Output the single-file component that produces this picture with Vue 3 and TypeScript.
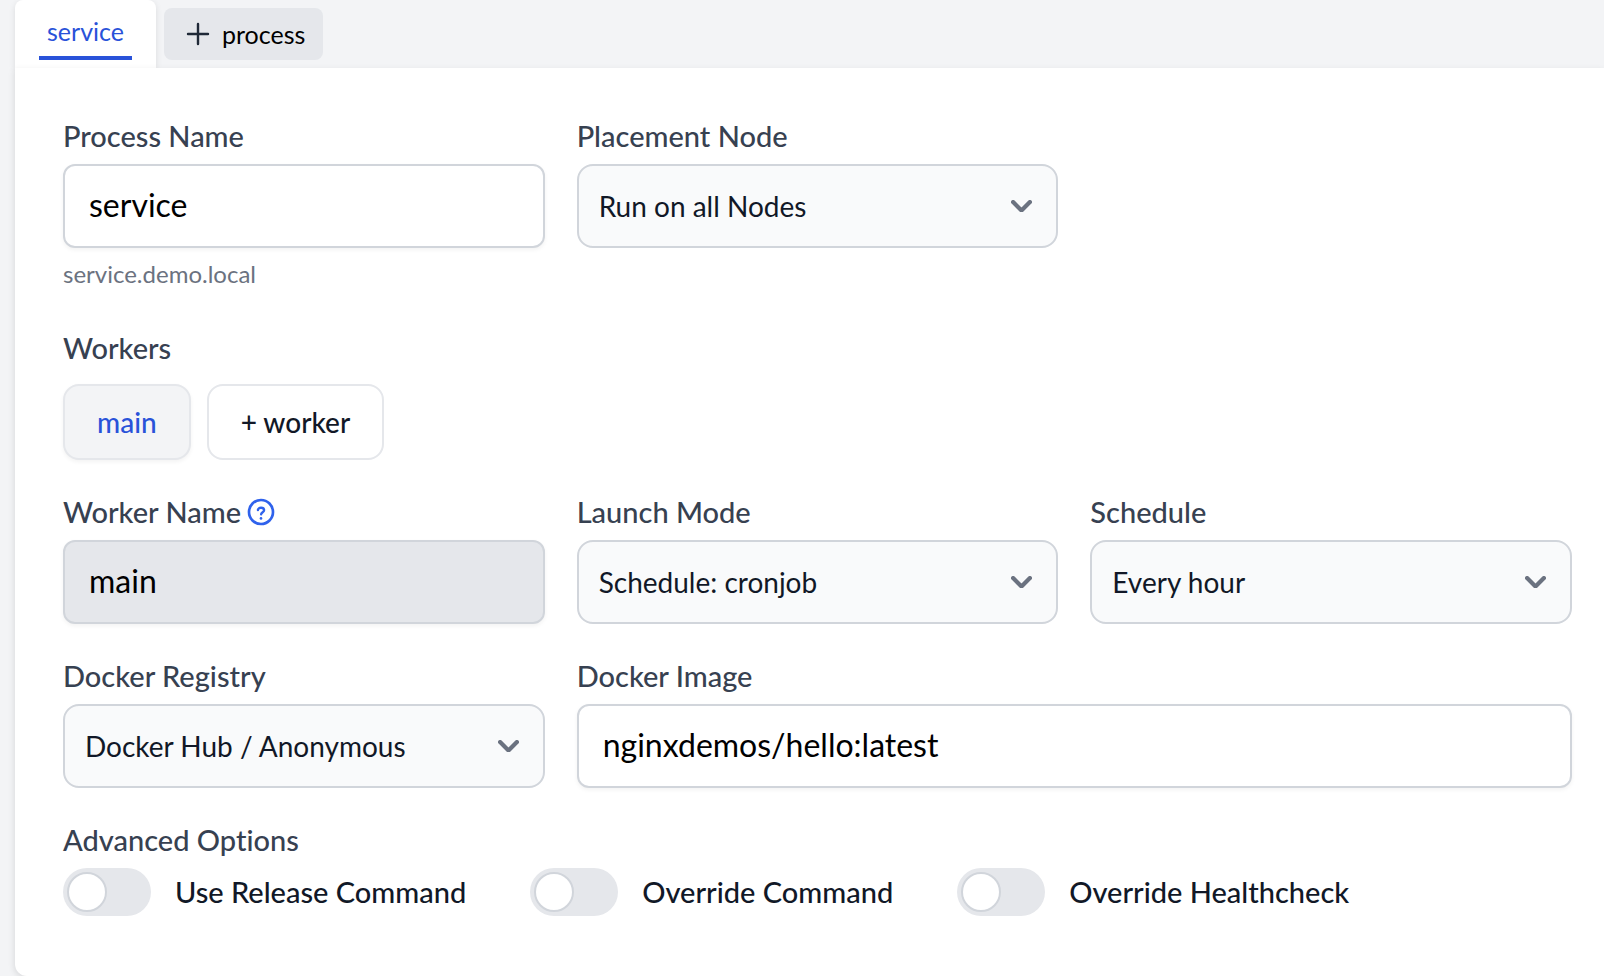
<script setup lang="ts">
import { ref } from 'vue'

interface Toggle {
  id: string
  label: string
  on: boolean
}

const processName = ref('service')
const placement = ref('Run on all Nodes')
const workerName = ref('main')
const launchMode = ref('Schedule: cronjob')
const schedule = ref('Every hour')
const registry = ref('Docker Hub / Anonymous')
const image = ref('nginxdemos/hello:latest')

const toggles = ref<Toggle[]>([
  { id: 'release-command', label: 'Use Release Command', on: false },
  { id: 'override-command', label: 'Override Command', on: false },
  { id: 'override-healthcheck', label: 'Override Healthcheck', on: false },
])
</script>

<template>
  <div class="page">
    <nav class="tabs">
      <div class="tab">
        <button type="button" class="tab-button">service</button>
      </div>
      <button type="button" class="add-process">
        <svg class="icon" viewBox="0 0 24 24" aria-hidden="true">
          <path d="M12 4.5v15M4.5 12h15" stroke-width="1.8" />
        </svg>
        process
      </button>
    </nav>

    <form class="card" @submit.prevent>
      <div class="row">
        <div class="field">
          <label class="label" for="process-name">Process Name</label>
          <input id="process-name" v-model="processName" class="control" type="text" />
          <p class="hint">service.demo.local</p>
        </div>
        <div class="field">
          <label class="label" for="placement">Placement Node</label>
          <div class="select-box">
            <select id="placement" v-model="placement" class="control select">
              <option>Run on all Nodes</option>
            </select>
            <svg class="chevron" viewBox="0 0 10 6" aria-hidden="true"><path d="m1 1 4 4 4-4" /></svg>
          </div>
        </div>
      </div>

      <section class="workers">
        <h2 class="label">Workers</h2>
        <div class="worker-list">
          <button type="button" class="worker active">main</button>
          <button type="button" class="worker">+ worker</button>
        </div>
      </section>

      <div class="row">
        <div class="field">
          <div class="label-line">
            <label class="label" for="worker-name">Worker Name</label>
            <button type="button" class="help" aria-label="Help">
              <svg class="icon" viewBox="0 0 24 24" aria-hidden="true">
                <circle cx="12" cy="12" r="9" stroke-width="2" />
                <path d="M12 16.8v.01" stroke-width="2" />
                <path d="M9.7 10.5c0-1 1-1.7 2.3-1.7s2.3.8 2.3 1.9c0 1.4-2.2 1.5-2.2 3" stroke-width="1.8" />
              </svg>
            </button>
          </div>
          <input id="worker-name" v-model="workerName" class="control locked" type="text" readonly />
        </div>
        <div class="field">
          <label class="label" for="launch-mode">Launch Mode</label>
          <div class="select-box">
            <select id="launch-mode" v-model="launchMode" class="control select">
              <option>Schedule: cronjob</option>
            </select>
            <svg class="chevron" viewBox="0 0 10 6" aria-hidden="true"><path d="m1 1 4 4 4-4" /></svg>
          </div>
        </div>
        <div class="field">
          <label class="label" for="schedule">Schedule</label>
          <div class="select-box">
            <select id="schedule" v-model="schedule" class="control select">
              <option>Every hour</option>
            </select>
            <svg class="chevron" viewBox="0 0 10 6" aria-hidden="true"><path d="m1 1 4 4 4-4" /></svg>
          </div>
        </div>
      </div>

      <div class="row">
        <div class="field">
          <label class="label" for="registry">Docker Registry</label>
          <div class="select-box">
            <select id="registry" v-model="registry" class="control select">
              <option>Docker Hub / Anonymous</option>
            </select>
            <svg class="chevron" viewBox="0 0 10 6" aria-hidden="true"><path d="m1 1 4 4 4-4" /></svg>
          </div>
        </div>
        <div class="field wide">
          <label class="label" for="image">Docker Image</label>
          <input id="image" v-model="image" class="control" type="text" />
        </div>
      </div>

      <section class="field">
        <h2 class="label">Advanced Options</h2>
        <div class="toggles">
          <label v-for="item in toggles" :key="item.id" class="toggle" :for="item.id">
            <input :id="item.id" v-model="item.on" class="switch" type="checkbox" />
            <span>{{ item.label }}</span>
          </label>
        </div>
      </section>
    </form>
  </div>
</template>

<style>
html {
  background: #f3f4f6;
  scrollbar-width: none;
}
</style>

<style scoped>
.page {
  padding-left: 15px;
  overflow: hidden;
  color: #111827;
  font: 28px/40px Lato, "Open Sans", sans-serif;
  font-variant-ligatures: none;
}

.page *,
.page *::before {
  box-sizing: border-box;
}

button,
input,
select {
  margin: 0;
  font: inherit;
}

.tabs {
  display: flex;
  align-items: flex-start;
  gap: 8px;
}

.tab {
  height: 68px;
  padding: 0 24px;
  border-radius: 8px 8px 0 0;
  background: #fff;
  box-shadow: 0 2px 6px rgb(0 0 0 / 10%);
}

.tab-button {
  height: 60px;
  padding: 6px 8px 0;
  border: 0;
  border-bottom: 4px solid #2952d9;
  background: none;
  color: #2952d9;
  font-size: 25px;
  line-height: 32px;
}

.add-process {
  display: flex;
  align-items: center;
  gap: 8px;
  height: 52px;
  margin-top: 8px;
  padding: 0 18px;
  border: 0;
  border-radius: 8px;
  background: #e5e7eb;
  color: #000;
  font-size: 25px;
  line-height: 32px;
}

.icon {
  display: block;
  width: 32px;
  height: 32px;
  fill: none;
  stroke: currentColor;
  stroke-linecap: round;
  stroke-linejoin: round;
}

.add-process .icon {
  color: #1f2937;
}

.card {
  position: relative;
  display: flex;
  flex-direction: column;
  gap: 32px;
  padding: 48px 32px 60px 48px;
  border-radius: 0 0 0 12px;
  background: #fff;
  box-shadow: -1px 2px 6px rgb(0 0 0 / 10%);
}

.row {
  display: grid;
  grid-template-columns: repeat(3, minmax(0, 1fr));
  gap: 32px;
}

.field {
  display: flex;
  flex-direction: column;
  gap: 8px;
}

.wide {
  grid-column: span 2;
}

.label {
  margin: 0;
  color: #374151;
  font-size: 29px;
  font-weight: 500;
  line-height: 40px;
}

.label-line {
  display: flex;
  align-items: center;
  gap: 4px;
}

.help {
  padding: 0;
  border: 0;
  background: none;
  color: #2f62ec;
}

.control {
  width: 100%;
  height: 84px;
  padding: 0 24px 4px;
  border: 2px solid #d1d5db;
  border-radius: 12px;
  background: #fff;
  box-shadow: 0 2px 4px rgb(0 0 0 / 5%);
  color: #000;
  font-size: 32px;
}

.locked {
  background: #e5e7eb;
}

.select-box {
  display: grid;
  align-items: center;
}

.select-box > * {
  grid-area: 1 / 1;
}

.select {
  appearance: none;
  padding: 0 64px 0 20px;
  border-radius: 16px;
  background: #f9fafb;
  box-shadow: none;
  color: #111827;
  font-size: 28px;
}

.chevron {
  justify-self: end;
  width: 21px;
  margin-right: 26px;
  fill: none;
  stroke: #6b7280;
  stroke-width: 2;
  stroke-linecap: round;
  stroke-linejoin: round;
  pointer-events: none;
}

.hint {
  margin: 0 0 4px;
  color: #6b7280;
  font-size: 24px;
  line-height: 36px;
}

.workers {
  display: flex;
  flex-direction: column;
  gap: 16px;
}

.worker-list {
  display: flex;
  gap: 16px;
}

.worker {
  height: 76px;
  padding: 0 32px;
  border: 2px solid #e5e7eb;
  border-radius: 16px;
  background: #fff;
  color: #111827;
  font-weight: 500;
}

.worker.active {
  background: #f3f4f6;
  box-shadow: 0 2px 4px rgb(0 0 0 / 5%);
  color: #2952d9;
}

.toggles {
  display: flex;
  flex-wrap: wrap;
  gap: 24px 64px;
}

.toggle {
  display: flex;
  align-items: center;
  gap: 24px;
  font-size: 29px;
  font-weight: 500;
}

.switch {
  appearance: none;
  display: flex;
  width: 88px;
  height: 48px;
  padding: 4px;
  border-radius: 24px;
  background: #e5e7eb;
}

.switch::before {
  content: "";
  width: 40px;
  height: 40px;
  border: 2px solid #d1d5db;
  border-radius: 50%;
  background: #fff;
}

.switch:checked {
  justify-content: flex-end;
  background: #2952d9;
}
</style>
